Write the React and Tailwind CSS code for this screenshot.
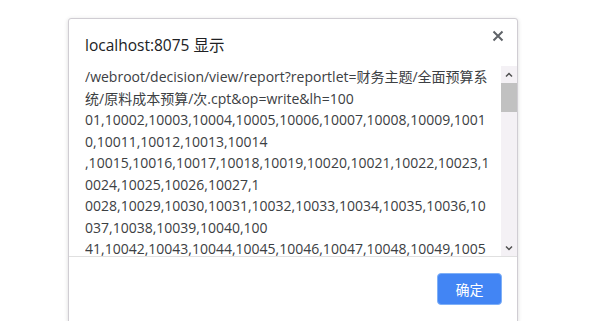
const lines = [
  "/webroot/decision/view/report?reportlet=财务主题/全面预算系",
  "统/原料成本预算/次.cpt&op=write&lh=100",
  "01,10002,10003,10004,10005,10006,10007,10008,10009,1001",
  "0,10011,10012,10013,10014",
  ",10015,10016,10017,10018,10019,10020,10021,10022,10023,1",
  "0024,10025,10026,10027,1",
  "0028,10029,10030,10031,10032,10033,10034,10035,10036,10",
  "037,10038,10039,10040,100",
  "41,10042,10043,10044,10045,10046,10047,10048,10049,1005",
];

export default function App() {
  return (
    <div className="h-[321px] w-[601px] overflow-hidden bg-white font-['Open_Sans','Noto_Sans_CJK_SC',sans-serif]">
      <div className="relative ml-[68px] mt-[18px] w-[450px] rounded-t-[3px] border border-[#d0cdd3] bg-white shadow-[0_1px_4px_rgba(0,0,0,0.15)]">
        {/* close */}
        <button className="absolute right-[13px] top-[11px] flex h-[12px] w-[12px] items-center justify-center">
          <svg width="12" height="12" viewBox="0 0 12 12">
            <path d="M1.5 1.5 L10.5 10.5 M10.5 1.5 L1.5 10.5" stroke="#5f6368" strokeWidth="2" />
          </svg>
        </button>

        <div className="pl-4 pt-[14px] text-[15.5px] leading-[24px] text-[#202124]">localhost:8075 显示</div>

        <div className="mt-[9px] flex h-[190px] pl-4">
          <div className="flex-1 overflow-hidden text-[14px] leading-[21.5px] text-[#3c4043]">
            {lines.map((l, i) => (
              <div key={i} className="whitespace-nowrap">{l}</div>
            ))}
          </div>
          {/* scrollbar */}
          <div className="flex w-[16px] flex-col bg-[#f4f1f5]">
            <div className="flex h-[17px] items-center justify-center">
              <svg width="8" height="6" viewBox="0 0 8 6">
                <path d="M1 4.5 L4 1.5 L7 4.5" stroke="#505050" strokeWidth="1.5" fill="none" />
              </svg>
            </div>
            <div className="h-[29px] bg-[#c1c1c1]" />
            <div className="flex-1" />
            <div className="flex h-[17px] items-center justify-center">
              <svg width="8" height="6" viewBox="0 0 8 6">
                <path d="M1 1.5 L4 4.5 L7 1.5" stroke="#505050" strokeWidth="1.5" fill="none" />
              </svg>
            </div>
          </div>
        </div>

        <div className="flex justify-end border-t border-[#e0e0e0] pb-4 pr-[15px] pt-4">
          <button className="h-[32px] w-[65px] rounded-[4px] border border-[#7fb0f7] bg-[#4285f4] text-[14px] text-white">
            确定
          </button>
        </div>
      </div>
    </div>
  );
}
